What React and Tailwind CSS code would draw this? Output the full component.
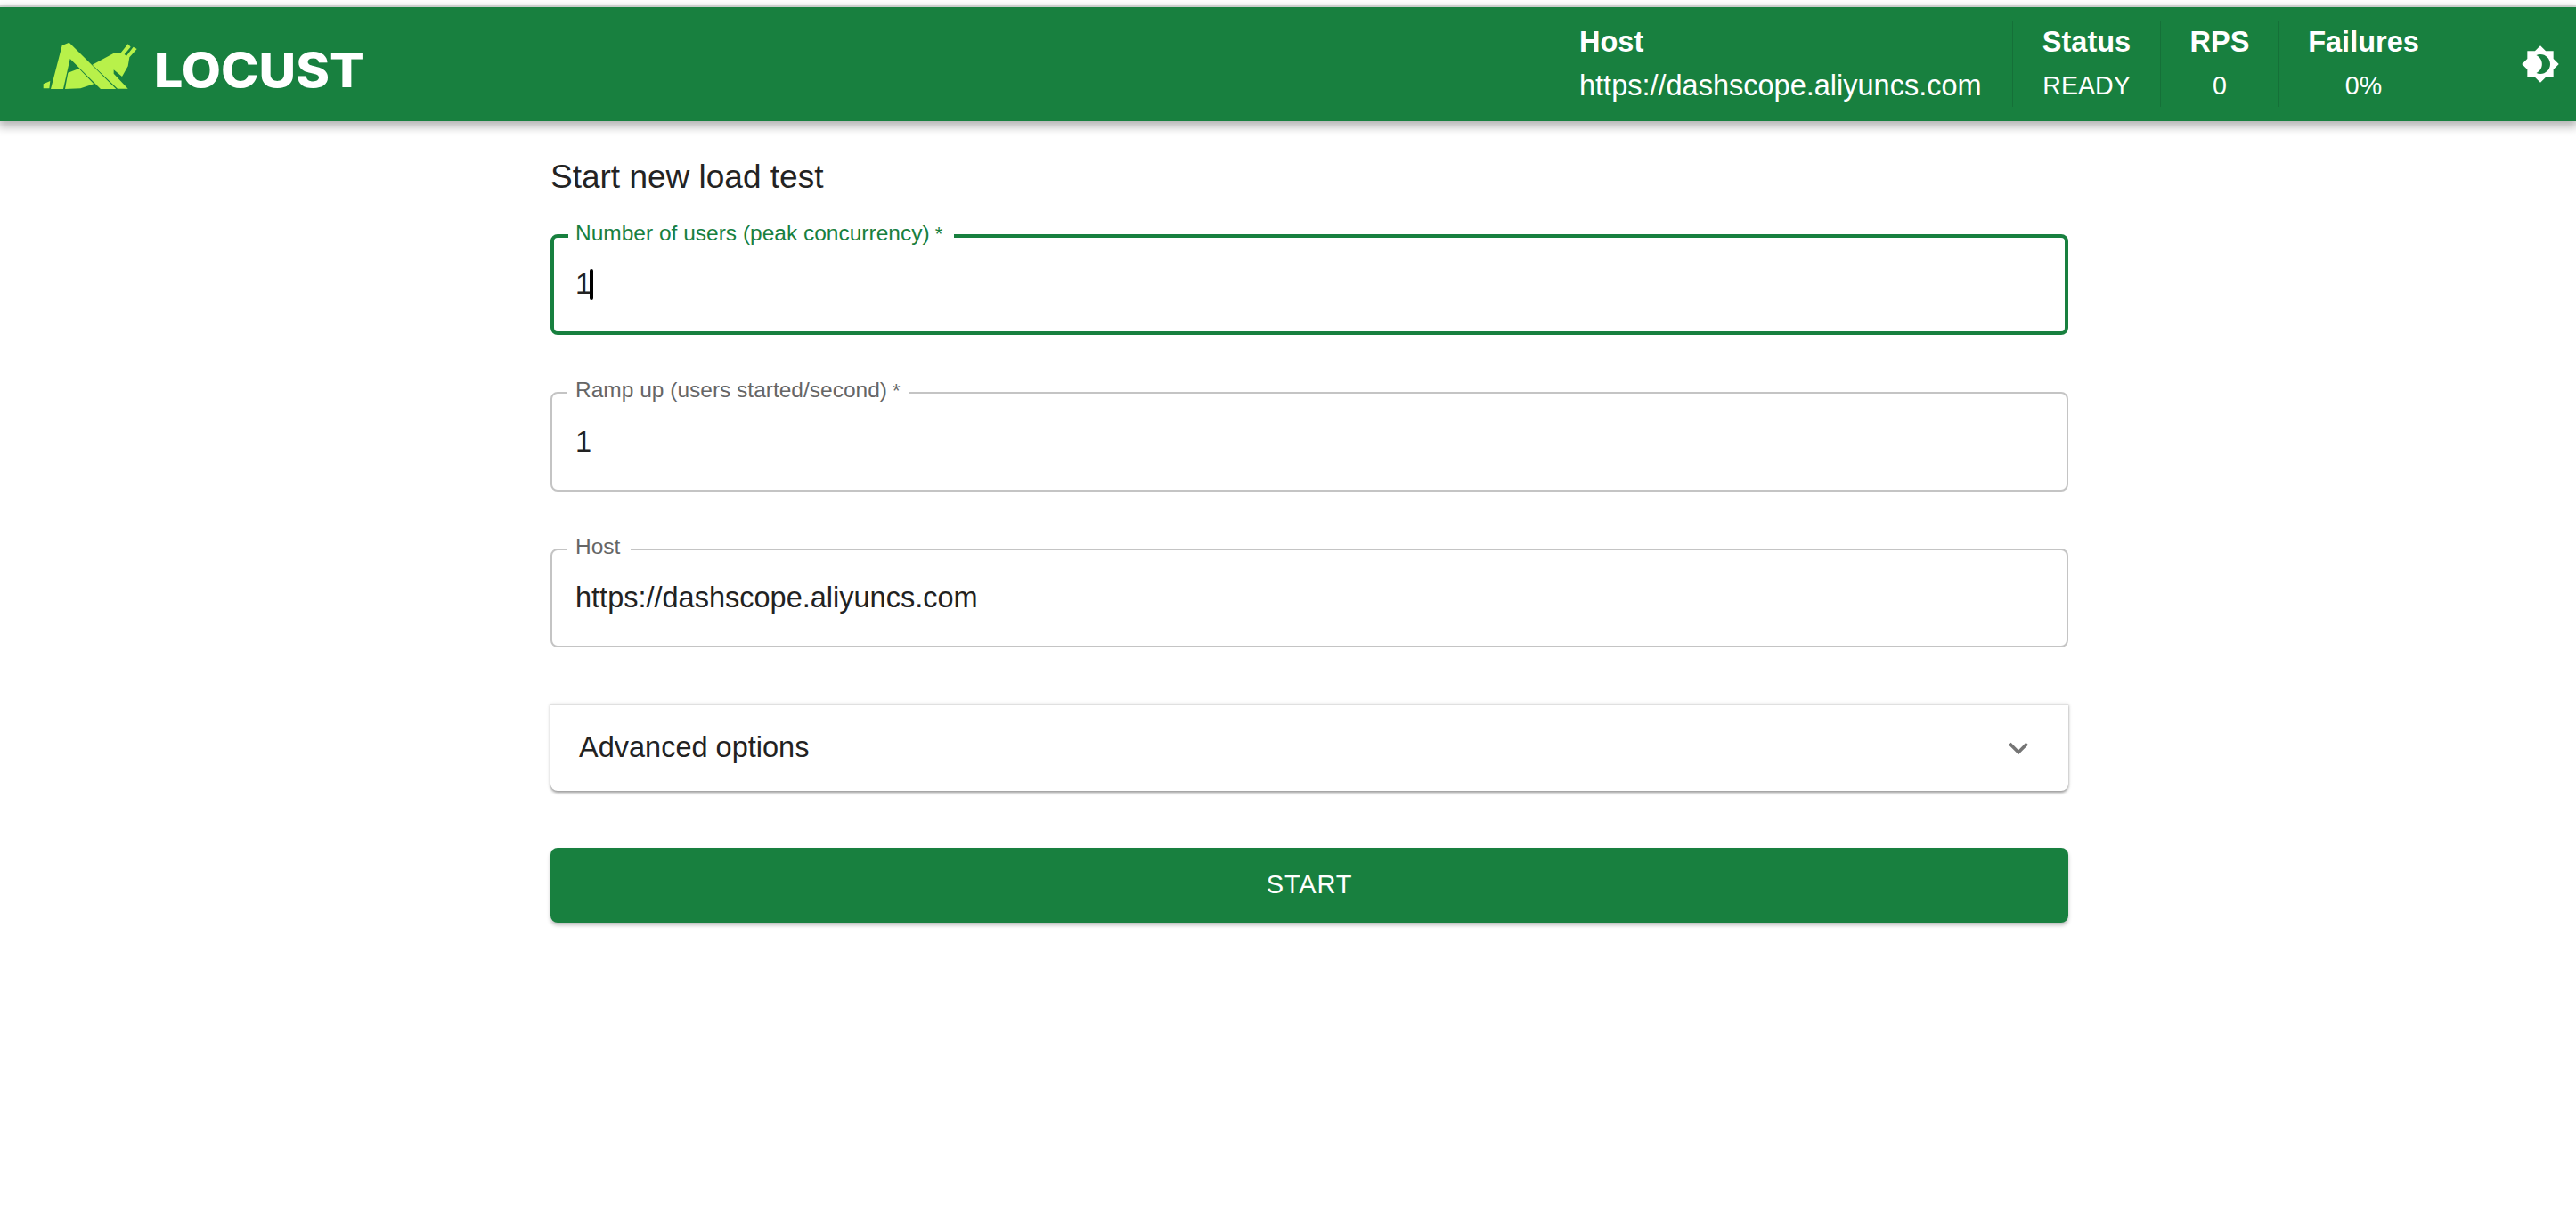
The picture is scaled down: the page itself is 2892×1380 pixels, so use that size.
function Logo() {
  return (
    <svg width="108" height="55" viewBox="50 45 324 165" className="shrink-0">
      <g fill="#b8f14a">
        <path d="M118 60 142 50 300 207 248 207 145 105 122 207 80 207z" />
        <path d="M138 152 175 138 225 190 180 205 128 207z" />
        <path d="M55 190 78 180 75 205 55 205z" />
        <path d="M220 125 295 85 316 85 340 55 349 65 328 90 335 95 358 65 370 72 345 100 340 130 320 165 292 142 292 155 340 206 305 206z" />
      </g>
    </svg>
  );
}

function Stat({ label, value, className }) {
  return (
    <div className={"flex h-[96px] flex-col items-center border-l border-[#157038] " + className}>
      <div className="text-[32.5px] leading-[40px] font-bold mt-[3px]">{label}</div>
      <div className="text-[28.6px] leading-[40px] mt-[9px]">{value}</div>
    </div>
  );
}

function Field({ label, required, value, notch, focused, caret, height }) {
  return (
    <div
      className={
        "relative rounded-[8px] flex items-center text-[32.5px] text-[#222222] " +
        height +
        (focused ? " border-[4px] border-[#18803f] pl-[24px]" : " border-2 border-[#c4c4c4] pl-[26px]")
      }
    >
      <span>{value}</span>
      {caret && <span className="-ml-[2px] h-[35px] w-[4px] rounded-sm bg-black" />}
      <label
        className={
          "absolute left-[16px] bg-white text-[24.5px] leading-[26px] whitespace-nowrap " +
          (focused ? "-top-[18px] pl-[8px] text-[#18803f]" : "-top-[17px] pl-[10px] text-[#666666]")
        }
        style={{ width: notch }}
      >
        {label}
        {required && <span className="text-[22px]"> *</span>}
      </label>
    </div>
  );
}

export default function App() {
  return (
    <div className="min-h-[1380px] bg-white font-['Liberation_Sans',Arial,sans-serif]">
      <div className="h-[8px] border-b-2 border-[#dfe3e0]" />
      <header className="flex h-[128px] items-center bg-[#18803f] text-white shadow-[0_4px_10px_2px_rgba(0,0,0,0.3)]">
        <div className="ml-[47px] flex items-end gap-[18px] pt-[2px]">
          <Logo />
          <span className="origin-left translate-y-[5px] scale-x-[1.08] text-[53px] leading-[53px] font-extrabold font-['Inter',sans-serif]">LOCUST</span>
        </div>
        <div className="ml-auto flex items-center">
          <div className="flex h-[96px] w-[486px] flex-col">
            <div className="text-[32.5px] leading-[40px] font-bold mt-[3px]">Host</div>
            <div className="text-[32.5px] leading-[40px] mt-[9px]">https://dashscope.aliyuncs.com</div>
          </div>
          <Stat label="Status" value="READY" className="w-[166px]" />
          <Stat label="RPS" value="0" className="w-[133px]" />
          <Stat label="Failures" value="0%" className="w-[190px]" />
          <svg viewBox="0 0 24 24" fill="currentColor" className="ml-[82px] mr-[18px] h-[44px] w-[44px]">
            <path d="M20 8.69V4h-4.69L12 .69 8.69 4H4v4.69L.69 12 4 15.31V20h4.69L12 23.31 15.31 20H20v-4.69L23.31 12 20 8.69zM12 18c-.89 0-1.74-.2-2.5-.55C11.56 16.5 13 14.42 13 12s-1.44-4.5-3.5-5.45C10.26 6.2 11.11 6 12 6c3.31 0 6 2.69 6 6s-2.69 6-6 6z" />
          </svg>
        </div>
      </header>
      <main className="ml-[618px] w-[1704px]">
        <h1 className="mt-[41px] text-[37px] leading-[44px] text-[#232323]">Start new load test</h1>
        <div className="mt-[42px] flex flex-col gap-[64px]">
          <Field label="Number of users (peak concurrency)" required value="1" notch="433px" height="h-[113px]" focused caret />
          <Field label="Ramp up (users started/second)" required value="1" notch="385px" height="h-[112px]" />
          <Field label="Host" value="https://dashscope.aliyuncs.com" notch="72px" height="h-[111px]" />
        </div>
        <div className="mt-[63px] flex h-[98px] items-center justify-between rounded-b-[8px] border-t-2 border-[#e0e0e0] pl-[32px] pr-[34px] text-[32.5px] text-[#222222] shadow-[0_2px_3px_rgba(0,0,0,0.35),0_1px_5px_rgba(0,0,0,0.12)]">
          <span className="pb-[1px]">Advanced options</span>
          <svg viewBox="0 0 24 24" fill="#757575" className="h-[44px] w-[44px]">
            <path d="M16.59 8.59 12 13.17 7.41 8.59 6 10l6 6 6-6z" />
          </svg>
        </div>
        <button className="mt-[64px] block h-[84px] w-full rounded-[8px] bg-[#18803f] text-[29px] tracking-[0.8px] text-white shadow-[0_3px_4px_rgba(0,0,0,0.25)]">
          START
        </button>
      </main>
    </div>
  );
}
